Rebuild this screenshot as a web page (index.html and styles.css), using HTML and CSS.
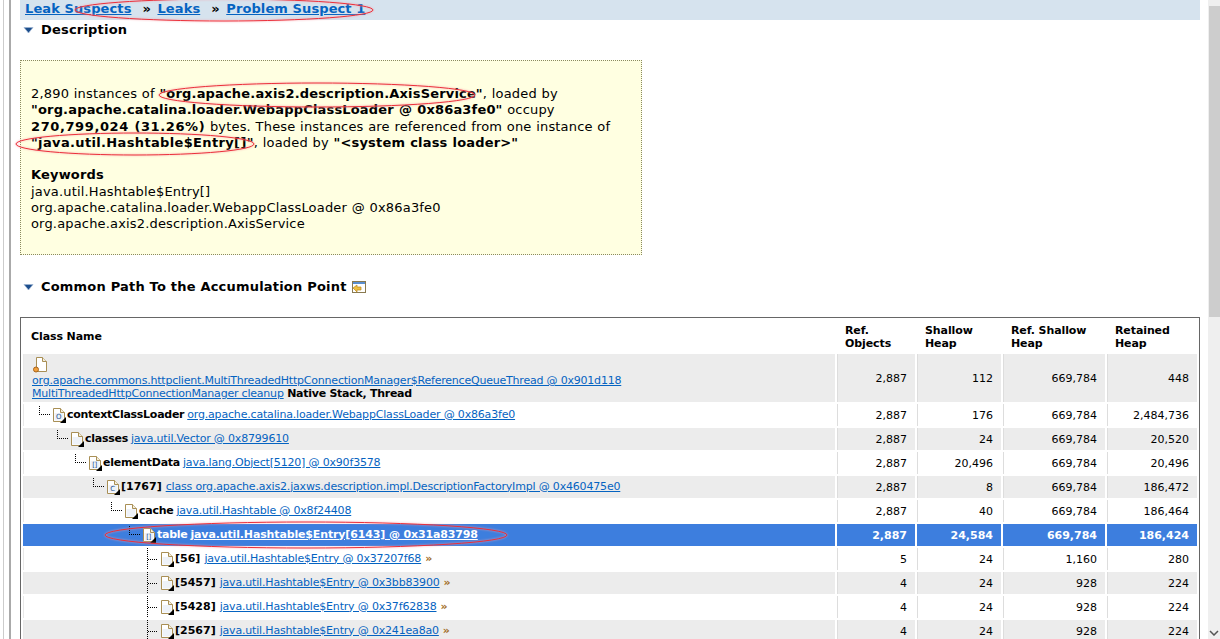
FILE: index.html
```html
<!DOCTYPE html>
<html lang="en-US">
  <head>
    <meta charset="utf-8" />
    <title>Problem Suspect 1</title>
    <link rel="stylesheet" href="styles.css">
  </head>
  <body>
    <svg class="defs" width="0" height="0">
      <symbol id="page" viewBox="0 0 14 16">
        <path d="M1.5 1.5H8.5L12.5 5.5V14.5H1.5Z" fill="#fff" stroke="#a98f55"/>
        <path d="M8.5 1.5V5.5H12.5" fill="#f3eedd" stroke="#a98f55"/>
        <path d="M2.5 6V13.5H11.5V6" fill="#eef2f8"/>
        <path d="M14 10V16H8Z" fill="#000"/>
      </symbol>
      <symbol id="marker" viewBox="0 0 11 11">
        <path d="M1 2.5H10L5.5 8Z" fill="#1c4e8c" stroke="#9db4d2" stroke-width=".8"/>
      </symbol>
    </svg>

    <div class="rail"></div>

    <main class="report">
      <div class="crumbs">
        <a href="#">Leak Suspects</a><span class="sep">»</span><a href="#">Leaks</a><span class="sep">»</span><a href="#">Problem Suspect 1</a>
      </div>

      <h2 class="heading heading-first"><svg class="marker"><use href="#marker"/></svg>Description</h2>

      <div class="note">
        <p>2,890 instances of <b>"org.apache.axis2.description.AxisService"</b>, loaded by<br>
        <b>"org.apache.catalina.loader.WebappClassLoader @ 0x86a3fe0"</b> occupy<br>
        <b class="amount">270,799,024 (31.26%)</b> bytes. These instances are referenced from one instance of<br>
        <b class="cls">"java.util.Hashtable$Entry[]"</b>, loaded by <b>"&lt;system class loader&gt;"</b></p>
        <p><b>Keywords</b><br>
        java.util.Hashtable$Entry[]<br>
        org.apache.catalina.loader.WebappClassLoader @ 0x86a3fe0<br>
        org.apache.axis2.description.AxisService</p>
      </div>

      <h2 class="heading heading-path"><svg class="marker"><use href="#marker"/></svg>Common Path To the Accumulation Point
        <svg class="query" viewBox="0 0 14 14" width="14" height="14">
          <rect x=".5" y="1.5" width="13" height="11" fill="#fff" stroke="#8a7a50"/>
          <rect x="1" y="2" width="12" height="2" fill="#5b8fd0"/>
          <path d="M1 8L5 5V7H9V10H5V12Z" fill="#f0c040" stroke="#b8861c" stroke-width=".7"/>
        </svg>
      </h2>

      <div class="table-box">
        <table class="tree">
          <thead>
            <tr>
              <th class="col-name">Class Name</th>
              <th class="col-objects">Ref.<br>Objects</th>
              <th class="col-shallow">Shallow<br>Heap</th>
              <th class="col-refshallow">Ref. Shallow<br>Heap</th>
              <th class="col-retained">Retained<br>Heap</th>
            </tr>
          </thead>
          <tbody>
            <tr class="odd root">
              <td>
                <svg class="icon root-icon" viewBox="0 0 14 16"><path d="M3.5 .5H9.5L13.5 4.5V14.5H3.5Z" fill="#fff" stroke="#a98f55"/><path d="M9.5 .5V4.5H13.5" fill="#f3eedd" stroke="#a98f55"/><circle cx="3" cy="12.5" r="2.5" fill="#f2a03c" stroke="#a8641c"/></svg><br>
                <a href="#">org.apache.commons.httpclient.MultiThreadedHttpConnectionManager$ReferenceQueueThread @ 0x901d118</a><br>
                <a href="#">MultiThreadedHttpConnectionManager cleanup</a> <b>Native Stack, Thread</b>
              </td>
              <td>2,887</td><td>112</td><td>669,784</td><td>448</td>
            </tr>
            <tr>
              <td><div class="node lvl1"><i class="dots"></i><span class="ic"><svg class="icon"><use href="#page"/></svg><em class="glyph">O</em></span><b>contextClassLoader</b><a href="#">org.apache.catalina.loader.WebappClassLoader @ 0x86a3fe0</a></div></td>
              <td>2,887</td><td>176</td><td>669,784</td><td>2,484,736</td>
            </tr>
            <tr class="odd">
              <td><div class="node lvl2"><i class="dots"></i><span class="ic"><svg class="icon"><use href="#page"/></svg></span><b>classes</b><a href="#">java.util.Vector @ 0x8799610</a></div></td>
              <td>2,887</td><td>24</td><td>669,784</td><td>20,520</td>
            </tr>
            <tr>
              <td><div class="node lvl3"><i class="dots"></i><span class="ic"><svg class="icon"><use href="#page"/></svg><em class="glyph">[]</em></span><b>elementData</b><a href="#">java.lang.Object[5120] @ 0x90f3578</a></div></td>
              <td>2,887</td><td>20,496</td><td>669,784</td><td>20,496</td>
            </tr>
            <tr class="odd">
              <td><div class="node lvl4"><i class="dots"></i><span class="ic"><svg class="icon"><use href="#page"/></svg><em class="glyph">C</em></span><b class="idx">[1767]</b><a href="#">class org.apache.axis2.jaxws.description.impl.DescriptionFactoryImpl @ 0x460475e0</a></div></td>
              <td>2,887</td><td>8</td><td>669,784</td><td>186,472</td>
            </tr>
            <tr>
              <td><div class="node lvl5"><i class="dots"></i><span class="ic"><svg class="icon"><use href="#page"/></svg></span><b>cache</b><a href="#">java.util.Hashtable @ 0x8f24408</a></div></td>
              <td>2,887</td><td>40</td><td>669,784</td><td>186,464</td>
            </tr>
            <tr class="selected">
              <td><div class="node lvl6"><i class="dots"></i><span class="ic"><svg class="icon"><use href="#page"/></svg><em class="glyph">[]</em></span><b>table</b><a href="#">java.util.Hashtable$Entry[6143] @ 0x31a83798</a></div></td>
              <td>2,887</td><td>24,584</td><td>669,784</td><td>186,424</td>
            </tr>
            <tr>
              <td><div class="node lvl7"><i class="dots long"></i><span class="ic"><svg class="icon"><use href="#page"/></svg></span><b class="idx">[56]</b><a href="#">java.util.Hashtable$Entry @ 0x37207f68</a><span class="more">»</span></div></td>
              <td>5</td><td>24</td><td>1,160</td><td>280</td>
            </tr>
            <tr class="odd">
              <td><div class="node lvl7"><i class="dots long"></i><span class="ic"><svg class="icon"><use href="#page"/></svg></span><b class="idx">[5457]</b><a href="#">java.util.Hashtable$Entry @ 0x3bb83900</a><span class="more">»</span></div></td>
              <td>4</td><td>24</td><td>928</td><td>224</td>
            </tr>
            <tr>
              <td><div class="node lvl7"><i class="dots long"></i><span class="ic"><svg class="icon"><use href="#page"/></svg></span><b class="idx">[5428]</b><a href="#">java.util.Hashtable$Entry @ 0x37f62838</a><span class="more">»</span></div></td>
              <td>4</td><td>24</td><td>928</td><td>224</td>
            </tr>
            <tr class="odd">
              <td><div class="node lvl7"><i class="dots long"></i><span class="ic"><svg class="icon"><use href="#page"/></svg></span><b class="idx">[2567]</b><a href="#">java.util.Hashtable$Entry @ 0x241ea8a0</a><span class="more">»</span></div></td>
              <td>4</td><td>24</td><td>928</td><td>224</td>
            </tr>
          </tbody>
        </table>
      </div>
    </main>

    <div class="scrollbar">
      <div class="thumb"></div>
      <svg class="arrow" viewBox="0 0 10 6" width="10" height="6"><path d="M1 1L5 5L9 1" fill="none" stroke="#555" stroke-width="1.5"/></svg>
    </div>

    <!-- red marks drawn over the screenshot -->
    <svg class="marks" width="1220" height="639">
      <ellipse cx="224" cy="10" rx="149" ry="11"/>
      <ellipse cx="317" cy="95" rx="158" ry="12"/>
      <ellipse cx="135" cy="144" rx="119" ry="11"/>
      <ellipse cx="306" cy="535" rx="201" ry="13"/>
    </svg>
  </body>
</html>
```

FILE: styles.css
```css
html, body {
  margin: 0;
  height: 639px;
  overflow: hidden;
}

body {
  display: flex;
  font: 13px "DejaVu Sans", Verdana, sans-serif;
  color: #000;
  background: #fff;
}

.defs {
  position: absolute;
}

a {
  color: #0563c1;
  text-decoration: underline;
}

/* left edge of the window */
.rail {
  flex: 0 0 20px;
  box-sizing: border-box;
  background: linear-gradient(90deg, #fff 3px, #ccc 3px, #ccc 4px, #fff 4px, #fff 9px, #aaa 9px, #aaa 11px, #fff 11px);
}

.report {
  flex: 0 0 1180px;
  min-width: 0;
}

.crumbs {
  height: 20px;
  box-sizing: border-box;
  padding: 0 5px;
  background: #d6e3ee;
  font-size: 13px;
  font-weight: bold;
  line-height: 18px;
  letter-spacing: .1px;
}

.sep {
  margin: 0 6.5px 0 11px;
  color: #000;
}

.heading {
  margin: 0;
  display: flex;
  align-items: center;
  font-size: 13px;
  font-weight: bold;
  line-height: 18px;
  letter-spacing: .2px;
}

.heading-first {
  margin-top: 1px;
}

.heading-path {
  margin-top: 23px;
  margin-bottom: 21px;
}

.marker {
  width: 11px;
  height: 11px;
  margin: 0 7px 0 3px;
}

.query {
  margin-left: 5px;
}

.note {
  width: 622px;
  height: 195px;
  margin-top: 21px;
  box-sizing: border-box;
  padding: 25px 10px 0;
  border: 1px dotted #8a8a60;
  background: #ffffe1;
  line-height: 16.33px;
  letter-spacing: .17px;
  word-spacing: .4px;
}

.note p {
  margin: 0 0 16px;
}

.note .amount {
  letter-spacing: .6px;
}

.note .cls {
  letter-spacing: .35px;
}

.table-box {
  width: 1180px;
  height: 322px;
  box-sizing: border-box;
  border: 1px solid #666;
  border-bottom: 0;
  overflow: hidden;
}

.tree {
  width: 1178px;
  table-layout: fixed;
  border-collapse: separate;
  border-spacing: 2px;
  font-size: 11px;
}

.tree th {
  height: 32px;
  box-sizing: border-box;
  padding: 4px 0 2px 8px;
  font-size: 11px;
  text-align: left;
  line-height: 13px;
  letter-spacing: -.1px;
}

.tree .col-name {
  padding-top: 2px;
}

.col-objects { width: 78px; }
.col-shallow { width: 84px; }
.col-refshallow { width: 102px; }
.col-retained { width: 90px; }

.tree td {
  height: 22px;
  box-sizing: border-box;
  padding: 0 8px;
  border-left: 1px solid #ddd;
  text-align: right;
  white-space: nowrap;
  overflow: hidden;
}

.tree td:first-child {
  padding: 0;
  border-left-color: #e8e8e8;
  text-align: left;
}

.tree td a {
  letter-spacing: -.18px;
}

.tree td b {
  letter-spacing: -.27px;
}

.tree td .idx {
  letter-spacing: 0;
}

.tree .odd td {
  background: #ececec;
}

.root td {
  height: 48px;
}

.tree .root td:first-child {
  padding: 0 0 2px 8px;
  line-height: 13px;
  vertical-align: bottom;
}

.tree .root a {
  letter-spacing: -.21px;
}

.node {
  display: flex;
  align-items: center;
  height: 22px;
  white-space: pre;
}

.node b,
.node a,
.more {
  margin-bottom: 2px;
}

.node b {
  margin-right: 3px;
}

.node .idx {
  margin-right: 4px;
}

.lvl1 { padding-left: 15px; }
.lvl2 { padding-left: 33px; }
.lvl3 { padding-left: 51px; }
.lvl4 { padding-left: 69px; }
.lvl5 { padding-left: 87px; }
.lvl6 { padding-left: 105px; }
.lvl7 { padding-left: 123px; }

.dots {
  flex: none;
  width: 11px;
  height: 9px;
  margin: -9px 2px 0 0;
  box-sizing: border-box;
  border-left: 1px dotted #000;
  border-bottom: 1px dotted #000;
}

.dots.long {
  height: 24px;
  margin-top: 0;
  border-bottom: 0;
  background: repeating-linear-gradient(90deg, #000 0 1px, transparent 1px 2px) 0 12px / 100% 1px no-repeat;
}

.ic {
  flex: none;
  position: relative;
  width: 14px;
  height: 16px;
  margin-right: 1px;
}

.icon {
  display: block;
  width: 14px;
  height: 16px;
}

.root-icon {
  display: inline-block;
  margin: 2px 0 -2px 1px;
}

.glyph {
  position: absolute;
  left: 2px;
  top: 5px;
  width: 9px;
  font: 7px/10px "DejaVu Sans", sans-serif;
  letter-spacing: -.5px;
  color: #1c4e8c;
  text-align: center;
}

.more {
  margin-left: 4px;
  color: #a06a20;
  font-weight: bold;
}

.tree .selected td {
  background: #3d7ede;
  border-left-color: #3d7ede;
  color: #fff;
  font-weight: bold;
}

.selected a {
  color: #fff;
}

.tree .selected a {
  letter-spacing: -.14px;
}

/* window scrollbar */
.scrollbar {
  position: absolute;
  top: 0;
  right: 0;
  width: 12px;
  height: 639px;
  background: #efefef;
}

.thumb {
  margin: 6px 0 0 1px;
  height: 311px;
  background: #cdcdcd;
}

.arrow {
  position: absolute;
  left: 1px;
  bottom: 3px;
}

.marks {
  position: absolute;
  left: 0;
  top: 0;
  pointer-events: none;
}

.marks ellipse {
  fill: none;
  stroke: #ea2f3a;
  stroke-width: 1;
  filter: drop-shadow(0 0 1px #f7a0a8);
}
```
